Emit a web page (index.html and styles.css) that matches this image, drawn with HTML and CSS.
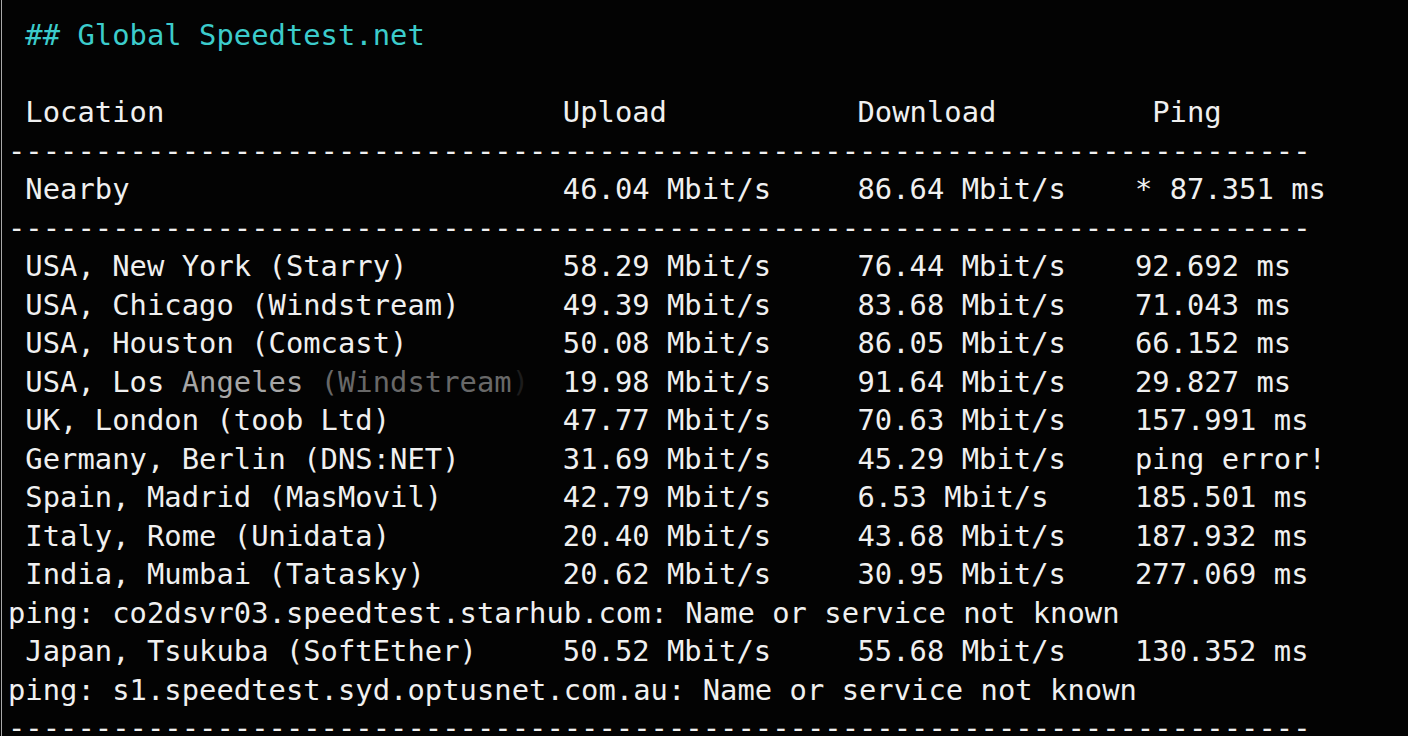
FILE: index.html
```html
<!DOCTYPE html>
<html>
<head>
<meta charset="utf-8">
<link rel="stylesheet" href="styles.css">
</head>
<body>
<div class="screen">
  <div class="term">
    <div class="line title"> ## Global Speedtest.net</div>
    <div class="line"> </div>
    <div class="row head"><span class="c1"> Location</span><span class="c2">Upload</span><span class="c3h">Download</span><span class="c4">Ping</span></div>
    <div class="line">---------------------------------------------------------------------------</div>
    <div class="row"><span class="c1"> Nearby</span><span class="c2">46.04 Mbit/s</span><span class="c3">86.64 Mbit/s</span><span class="c4">* 87.351 ms</span></div>
    <div class="line">---------------------------------------------------------------------------</div>
    <div class="row"><span class="c1"> USA, New York (Starry)</span><span class="c2">58.29 Mbit/s</span><span class="c3">76.44 Mbit/s</span><span class="c4">92.692 ms</span></div>
    <div class="row"><span class="c1"> USA, Chicago (Windstream)</span><span class="c2">49.39 Mbit/s</span><span class="c3">83.68 Mbit/s</span><span class="c4">71.043 ms</span></div>
    <div class="row"><span class="c1"> USA, Houston (Comcast)</span><span class="c2">50.08 Mbit/s</span><span class="c3">86.05 Mbit/s</span><span class="c4">66.152 ms</span></div>
    <div class="row"><span class="c1"> USA, Los <span class="fade1">Angeles</span> <span class="fade2">(Windstream</span><span class="fade3">)</span></span><span class="c2">19.98 Mbit/s</span><span class="c3">91.64 Mbit/s</span><span class="c4">29.827 ms</span></div>
    <div class="row"><span class="c1"> UK, London (toob Ltd)</span><span class="c2">47.77 Mbit/s</span><span class="c3">70.63 Mbit/s</span><span class="c4">157.991 ms</span></div>
    <div class="row"><span class="c1"> Germany, Berlin (DNS:NET)</span><span class="c2">31.69 Mbit/s</span><span class="c3">45.29 Mbit/s</span><span class="c4">ping error!</span></div>
    <div class="row"><span class="c1"> Spain, Madrid (MasMovil)</span><span class="c2">42.79 Mbit/s</span><span class="c3">6.53 Mbit/s</span><span class="c4">185.501 ms</span></div>
    <div class="row"><span class="c1"> Italy, Rome (Unidata)</span><span class="c2">20.40 Mbit/s</span><span class="c3">43.68 Mbit/s</span><span class="c4">187.932 ms</span></div>
    <div class="row"><span class="c1"> India, Mumbai (Tatasky)</span><span class="c2">20.62 Mbit/s</span><span class="c3">30.95 Mbit/s</span><span class="c4">277.069 ms</span></div>
    <div class="line">ping: co2dsvr03.speedtest.starhub.com: Name or service not known</div>
    <div class="row"><span class="c1"> Japan, Tsukuba (SoftEther)</span><span class="c2">50.52 Mbit/s</span><span class="c3">55.68 Mbit/s</span><span class="c4">130.352 ms</span></div>
    <div class="line">ping: s1.speedtest.syd.optusnet.com.au: Name or service not known</div>
    <div class="line">---------------------------------------------------------------------------</div>
  </div>
</div>
</body>
</html>
```
FILE: styles.css
```css
html, body {
  margin: 0;
  padding: 0;
  background: #030303;
  height: 100%;
  overflow: hidden;
}
.screen {
  height: 100%;
  margin-left: 1px;
  border-left: 1px solid #a9a9a9;
  padding-left: 6px;
  padding-top: 16px;
  box-sizing: border-box;
}
.term {
  font-family: "DejaVu Sans Mono", "Liberation Mono", monospace;
  font-size: 28.8px;
  line-height: 38.5px;
  color: #f0f0f0;
  letter-spacing: 0.03px;
}
.line {
  height: 38.5px;
  white-space: pre;
}
.title {
  color: #3ccccc;
}
.row {
  display: flex;
  height: 38.5px;
}
.row span {
  white-space: pre;
}
.c1 { width: 32ch; flex: none; }
.c2 { width: 17ch; flex: none; }
.c3 { width: 16ch; flex: none; }
.c3h { width: 17ch; flex: none; }
.c4 { flex: none; }
.fade1 { color: #a6a6a6; }
.fade2 { color: #686868; }
.fade3 { color: #1c1c1c; }
```
